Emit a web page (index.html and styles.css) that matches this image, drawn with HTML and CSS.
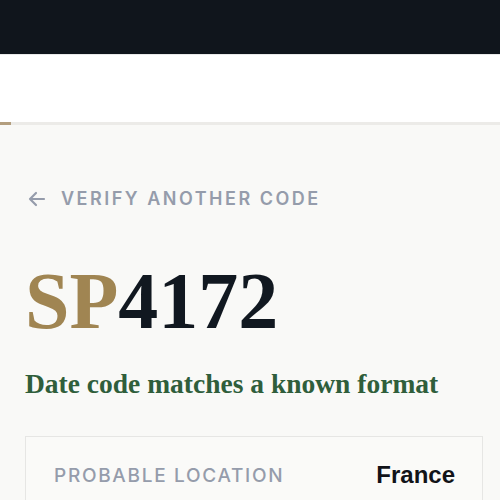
FILE: index.html
```html
<!DOCTYPE html>
<html>
<head>
<meta charset="utf-8">
<link rel="stylesheet" href="styles.css">
</head>
<body>
<header class="topbar"></header>
<nav class="navbar"></nav>
<div class="progress"><div class="progress-fill"></div></div>
<main class="main">
  <a class="back" href="#">
    <svg class="back-icon" viewBox="0 0 20 20" width="20" height="20"><path d="M17 10H3M9 4L3 10L9 16" fill="none" stroke="currentColor" stroke-width="2.2" stroke-linecap="round" stroke-linejoin="round"/></svg>
    <span>Verify another code</span>
  </a>
  <h1 class="code"><span class="code-prefix">SP</span>4172</h1>
  <p class="status">Date code matches a known format</p>
  <section class="card">
    <div class="row">
      <span class="label">Probable location</span>
      <span class="value">France</span>
    </div>
  </section>
</main>
</body>
</html>
```
FILE: styles.css
```css
html, body { margin: 0; padding: 0; }
body { background: #f9f9f7; font-family: Inter, "Liberation Sans", sans-serif; }
.topbar { height: 54px; background: #10151c; }
.navbar { height: 67px; background: #ffffff; border-top: 1px solid #e9e9e9; }
.progress { height: 3px; background: #ecebe8; }
.progress-fill { width: 11px; height: 100%; background: #b39e7e; }
.main { padding: 63px 17px 0 25px; }
.back { display: flex; align-items: center; gap: 14px; color: #959cab; text-decoration: none; text-transform: uppercase; font-size: 18px; font-weight: 600; letter-spacing: 2.5px; padding-left: 2px; }
.back-icon { display: block; }
.code { margin: 52px 0 0 0; font-family: "Liberation Serif", serif; font-weight: 700; font-size: 80px; line-height: 1; color: #111820; }
.code-prefix { color: #a08552; }
.status { margin: 27px 0 0 0; font-family: "Liberation Serif", serif; font-weight: 700; font-size: 27.5px; color: #2f5e3b; }
.card { margin-top: 36px; border: 1px solid #e6e6e4; background: #fafaf8; height: 100px; }
.row { display: flex; justify-content: space-between; align-items: center; padding: 24px 27px 0 28px; }
.label { text-transform: uppercase; color: #959cab; font-size: 19px; letter-spacing: 1.7px; font-weight: 500; }
.value { font-family: "Liberation Sans", sans-serif; font-weight: 700; font-size: 24px; color: #111318; }
```
